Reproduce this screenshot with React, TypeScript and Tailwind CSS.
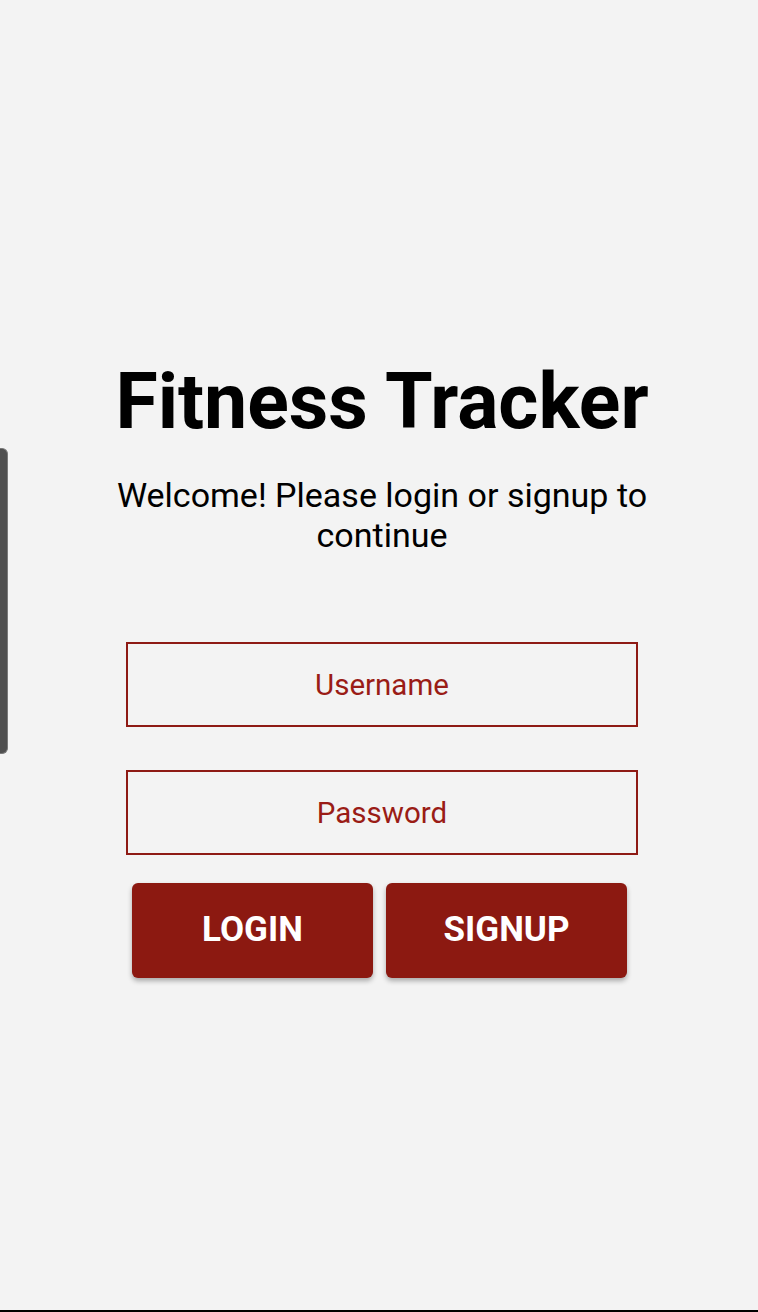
import { useState } from "react";

export default function App() {
  const [username, setUsername] = useState("");
  const [password, setPassword] = useState("");

  return (
    <div
      className="relative flex h-[1312px] w-full flex-col items-center border-b-2 border-black bg-[#f3f3f3] pl-[6px] pt-[358px] text-black"
      style={{ fontFamily: "Roboto, 'Liberation Sans', sans-serif" }}
    >
      {/* side handle */}
      <div className="absolute left-0 top-[448px] h-[306px] w-[8px] rounded-r-[6px] border border-l-0 border-[#7a7a7a] bg-[#4f4f4f]" />

      <h1 className="text-[77px] font-bold leading-[89px]">Fitness Tracker</h1>
      <p className="mt-[28px] w-[580px] text-center text-[34px] leading-[40px]">
        Welcome! Please login or signup to continue
      </p>

      <div className="mt-[87px] flex w-[512px] flex-col gap-[43px]">
        <input
          value={username}
          onChange={(e) => setUsername(e.target.value)}
          placeholder="Username"
          className="h-[85px] w-full border-2 border-[#8e1a14] bg-transparent text-center text-[29.5px] text-[#8e1a14] outline-none placeholder:text-[#9a1c16]"
        />
        <input
          type="password"
          value={password}
          onChange={(e) => setPassword(e.target.value)}
          placeholder="Password"
          className="h-[85px] w-full border-2 border-[#8e1a14] bg-transparent text-center text-[29.5px] text-[#8e1a14] outline-none placeholder:text-[#9a1c16]"
        />
      </div>

      <div className="mt-[28px] flex gap-[13px] pr-[5px]">
        <button className="h-[95px] w-[241px] rounded-[6px] bg-[#8c1911] text-[35px] font-bold text-white shadow-[0_3px_5px_rgba(0,0,0,0.3)]">
          LOGIN
        </button>
        <button className="h-[95px] w-[241px] rounded-[6px] bg-[#8c1911] text-[35px] font-bold text-white shadow-[0_3px_5px_rgba(0,0,0,0.3)]">
          SIGNUP
        </button>
      </div>
    </div>
  );
}
